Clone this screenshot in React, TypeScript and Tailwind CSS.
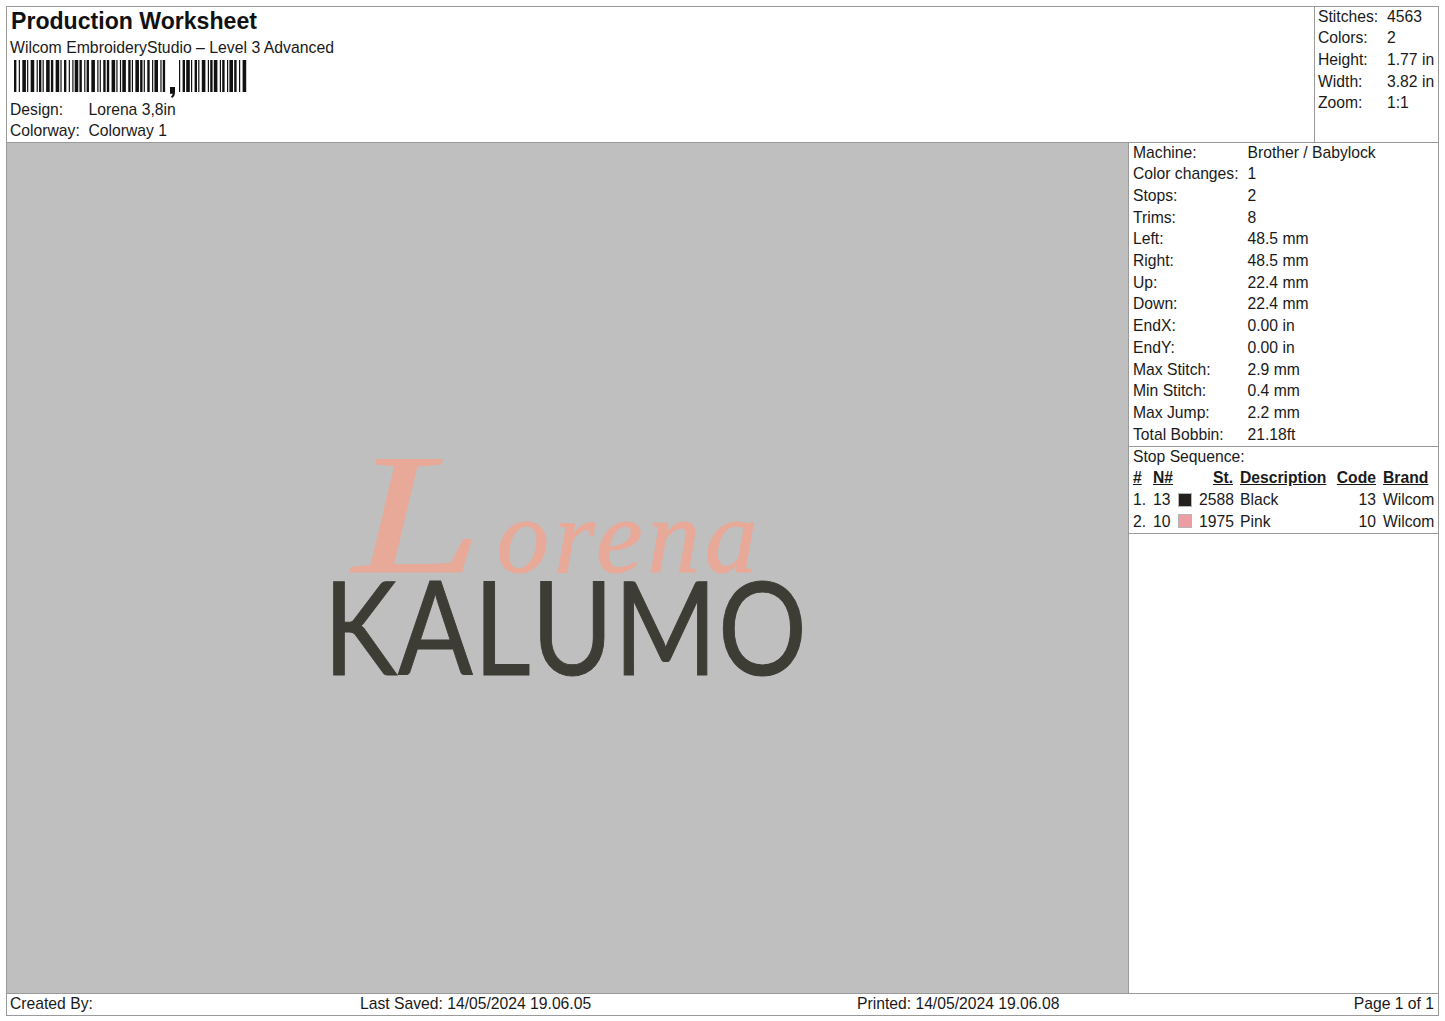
const summary = [
  ["Stitches:", "4563"],
  ["Colors:", "2"],
  ["Height:", "1.77 in"],
  ["Width:", "3.82 in"],
  ["Zoom:", "1:1"],
];

const machine = [
  ["Machine:", "Brother / Babylock"],
  ["Color changes:", "1"],
  ["Stops:", "2"],
  ["Trims:", "8"],
  ["Left:", "48.5 mm"],
  ["Right:", "48.5 mm"],
  ["Up:", "22.4 mm"],
  ["Down:", "22.4 mm"],
  ["EndX:", "0.00 in"],
  ["EndY:", "0.00 in"],
  ["Max Stitch:", "2.9 mm"],
  ["Min Stitch:", "0.4 mm"],
  ["Max Jump:", "2.2 mm"],
  ["Total Bobbin:", "21.18ft"],
];

const stops = [
  { n: "1.", needle: "13", color: "#231f1c", st: "2588", name: "Black", code: "13" },
  { n: "2.", needle: "10", color: "#ee9ca3", st: "1975", name: "Pink", code: "10" },
];

// [bar, gap] widths read off the reference
const barsLeft = [
  2, 2, 1, 2, 3, 1, 1, 2, 3, 2, 1, 1, 2, 1, 1, 2, 3, 1, 2, 2, 3, 1, 1, 2, 2, 2, 1, 2, 1, 1, 3, 1, 2, 2,
  1, 1, 2, 2, 3, 2, 1, 1, 1, 2, 2, 1, 2, 2, 3, 1, 1, 2, 1, 1, 3, 2, 2, 1, 1, 2, 3, 1, 2, 1, 1, 2, 2, 2,
  1, 1, 3, 2, 1, 1, 2, 1,
];
const barsRight = [
  1, 2, 2, 1, 3, 1, 1, 2, 2, 1, 1, 2, 3, 2, 1, 1, 2, 1, 3, 2, 1, 1, 2, 2, 1, 1, 3, 1, 2, 2, 1, 2, 3,
];

const barRects = (widths: number[]) => {
  let x = 0;
  return widths.map((w, i) => {
    const at = x;
    x += w;
    return i % 2 === 0 ? <rect key={i} x={at} y={0} width={w} height={32} fill="#111" /> : null;
  });
};

const Barcode = () => (
  <svg width="240" height="39" viewBox="0 0 240 39" className="block ml-[4px]">
    <g transform="scale(1.19 1)">{barRects(barsLeft)}</g>
    <path d="M156 27h5v5c0 3-1 5-3 6l-1-1.500c1-.6 1.500-1.500 1.600-2.700H156z" fill="#111" />
    <g transform="translate(165 0) scale(1.2 1)">{barRects(barsRight)}</g>
  </svg>
);

export default function App() {
  return (
    <div className="w-[1445px] h-[1021px] bg-white pt-[6px] px-[6px] font-['Liberation_Sans',Arial,sans-serif] text-[15.7px] leading-[21.7px] text-[#1a1a1a] overflow-hidden">
      <div className="w-[1433px] h-[1010px] border border-[#9a9a9a] flex flex-col">
        {/* Header */}
        <div className="h-[136px] flex border-b border-[#9a9a9a] shrink-0">
          <div className="flex-1 pl-[3px]">
            <h1 className="text-[23.1px] leading-[28px] font-bold text-[#111] pl-[1px]">Production Worksheet</h1>
            <div className="mt-[2px] text-[15.8px]">Wilcom EmbroideryStudio – Level 3 Advanced</div>
            <div className="mt-[1px] h-[39px]">
              <Barcode />
            </div>
            <div className="flex">
              <span className="w-[78.5px]">Design:</span>
              <span>Lorena 3,8in</span>
            </div>
            <div className="flex">
              <span className="w-[78.5px]">Colorway:</span>
              <span>Colorway 1</span>
            </div>
          </div>
          <div className="w-[124px] border-l border-[#9a9a9a] pl-[3px] flex flex-col">
            <div className="-mt-[1.5px]">
              {summary.map(([label, value]) => (
                <div key={label} className="flex">
                  <span className="w-[69px]">{label}</span>
                  <span>{value}</span>
                </div>
              ))}
            </div>
          </div>
        </div>

        {/* Main */}
        <div className="flex-1 flex min-h-0">
          <div className="w-[1121px] bg-[#bfbfbf] pb-[9px] flex flex-col items-center justify-center">
            <div className="h-[122px] w-[410px] mr-[20px] flex items-baseline whitespace-nowrap font-['Liberation_Serif',serif] italic text-[#e8a998] [-webkit-text-stroke:1px_#e8a998]">
              <span className="inline-block w-[146px] text-[172px] leading-[118px] scale-x-[1.35] origin-left">L</span>
              <span className="text-[105px] leading-[118px] tracking-[5px]">orena</span>
            </div>
            <div className="h-[96px] font-['Lato',sans-serif] text-[129px] leading-[96px] [font-kerning:none] tracking-[1px] mr-[4px] text-[#3e3d35] scale-x-[0.86] [-webkit-text-stroke:1px_#3e3d35]">KALUMO</div>
          </div>
          <div className="flex-1 border-l border-[#9a9a9a]">
            <div className="pl-[4px] border-b border-[#9a9a9a] h-[304px] flex flex-col">
              <div className="-mt-[1.5px]">
                {machine.map(([label, value]) => (
                  <div key={label} className="flex">
                    <span className="w-[114.5px]">{label}</span>
                    <span>{value}</span>
                  </div>
                ))}
              </div>
            </div>
            <div className="border-b border-[#9a9a9a] h-[87px] pl-[4px] flex flex-col">
              <div className="-mt-[1.5px]">
                <div>Stop Sequence:</div>
                <div className="grid grid-cols-[20px_25px_21px_34px_82px_61px_1fr]">
                  <span className="font-bold underline">#</span>
                  <span className="font-bold underline">N#</span>
                  <span />
                  <span className="font-bold underline text-right">St.</span>
                  <span className="font-bold underline pl-[7px]">Description</span>
                  <span className="font-bold underline text-right">Code</span>
                  <span className="font-bold underline pl-[7px]">Brand</span>
                  {stops.map((s) => (
                    <div key={s.n} className="contents">
                      <span>{s.n}</span>
                      <span>{s.needle}</span>
                      <span className="flex items-center">
                        <span className="block w-[14px] h-[14px] border border-[#b5b5b5]" style={{ backgroundColor: s.color }} />
                      </span>
                      <span className="text-right">{s.st}</span>
                      <span className="pl-[7px]">{s.name}</span>
                      <span className="text-right">{s.code}</span>
                      <span className="pl-[7px] whitespace-nowrap">Wilcom</span>
                    </div>
                  ))}
                </div>
              </div>
            </div>
          </div>
        </div>

        {/* Footer */}
        <div className="h-[22px] shrink-0 border-t border-[#9a9a9a] pl-[3px] pr-[4px]">
          <div className="-mt-[1px] grid grid-cols-[350px_497px_1fr_auto]">
            <span>Created By:</span>
            <span>Last Saved: 14/05/2024 19.06.05</span>
            <span>Printed: 14/05/2024 19.06.08</span>
            <span>Page 1 of 1</span>
          </div>
        </div>
      </div>
    </div>
  );
}
